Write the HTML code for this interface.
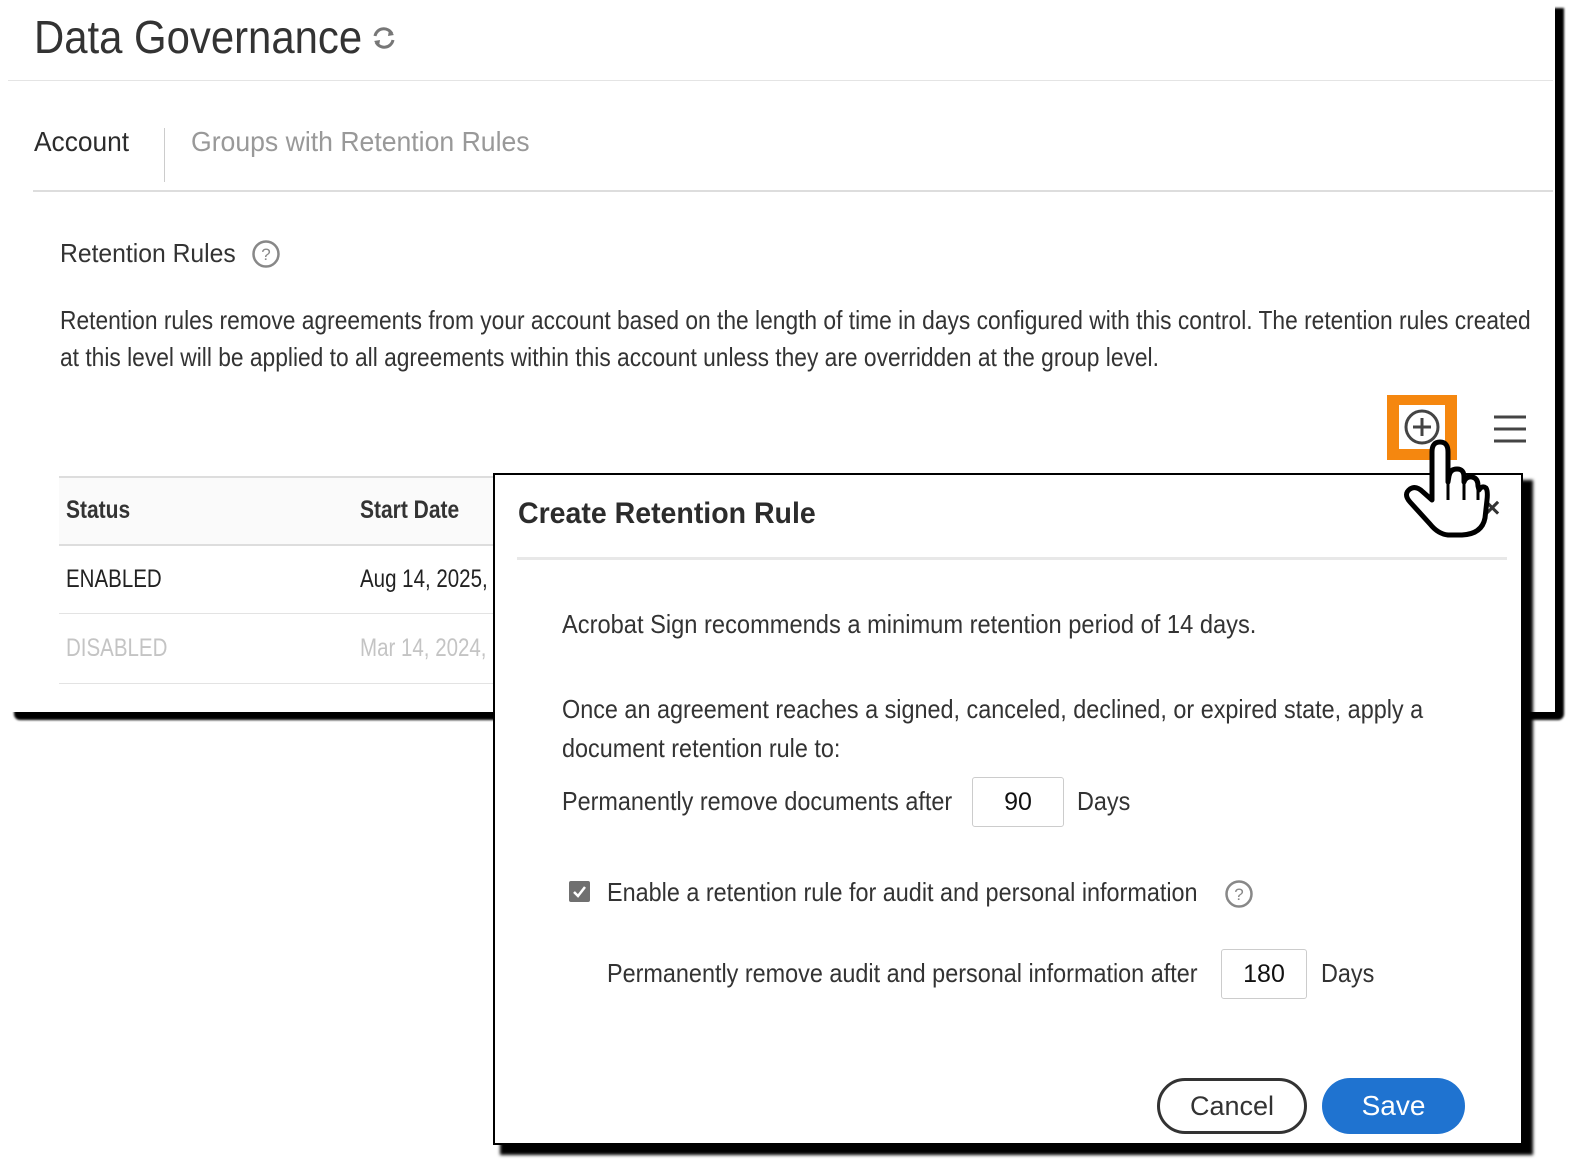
<!DOCTYPE html>
<html><head><meta charset="utf-8"><style>
*{margin:0;padding:0;box-sizing:border-box}
body{width:1595px;height:1176px;background:#fff;position:relative;overflow:hidden;font-family:"Liberation Sans",sans-serif;color:#2c2c2c}
.a{position:absolute;white-space:nowrap}
.c{display:inline-block;transform:scaleX(.82);transform-origin:left center}
</style></head><body>
<div class="a" style="left:14px;top:8px;width:1550px;height:712px;background:#000;border-radius:0 0 6px 6px;filter:blur(1px)"></div>
<div class="a" style="left:8px;top:0;width:1547px;height:712px;background:#fff"></div>

<div class="a" style="left:34px;top:10px;font-size:46px;color:#333"><span class="c" style="transform:scaleX(.91)">Data Governance</span></div>
<svg class="a" style="left:370px;top:24px" width="28" height="28" viewBox="0 0 28 28"><path d="M5 12 A9 9 0 0 1 22 10" fill="none" stroke="#777" stroke-width="3"/><path d="M23 16 A9 9 0 0 1 6 18" fill="none" stroke="#777" stroke-width="3"/><path d="M19 6 L24 11 L18 12Z" fill="#777"/><path d="M9 22 L4 17 L10 16Z" fill="#777"/></svg>
<div class="a" style="left:8px;top:80px;width:1545px;height:1px;background:#e4e4e4"></div>

<div class="a" style="left:34px;top:126px;font-size:28px;color:#2c2c2c"><span class="c" style="transform:scaleX(.94)">Account</span></div>
<div class="a" style="left:164px;top:128px;width:1px;height:54px;background:#ccc"></div>
<div class="a" style="left:191px;top:126px;font-size:28px;color:#999"><span class="c" style="transform:scaleX(.95)">Groups with Retention Rules</span></div>
<div class="a" style="left:33px;top:190px;width:1520px;height:2px;background:#ddd"></div>

<div class="a" style="left:60px;top:238px;font-size:26px;color:#333"><span class="c" style="transform:scaleX(.95)">Retention Rules</span></div>
<svg class="a" style="left:251px;top:239px" width="30" height="30" viewBox="0 0 30 30"><circle cx="15" cy="15" r="12.5" fill="none" stroke="#888" stroke-width="2.5"/><text x="15" y="21" font-size="17" text-anchor="middle" fill="#888" font-family="Liberation Sans">?</text></svg>

<div class="a" style="left:60px;top:302px;font-size:26px;color:#333;line-height:37px"><span class="c" style="transform:scaleX(.876)">Retention rules remove agreements from your account based on the length of time in days configured with this control. The retention rules created</span><br><span class="c" style="transform:scaleX(.876)">at this level will be applied to all agreements within this account unless they are overridden at the group level.</span></div>

<div class="a" style="left:1387px;top:395px;width:70px;height:65px;background:#f5870f"></div>
<div class="a" style="left:1399px;top:405px;width:46px;height:44px;background:#fff"></div>
<svg class="a" style="left:1402px;top:407px" width="40" height="40" viewBox="0 0 40 40"><circle cx="20" cy="20" r="16" fill="none" stroke="#444" stroke-width="3"/><path d="M20 11v18M11 20h18" stroke="#444" stroke-width="3"/></svg>
<svg class="a" style="left:1492px;top:414px" width="36" height="30" viewBox="0 0 36 30"><path d="M2 3h32M2 15h32M2 27h32" stroke="#444" stroke-width="3"/></svg>

<div class="a" style="left:59px;top:476px;width:440px;height:70px;background:#fafafa;border-top:2px solid #ddd;border-bottom:2px solid #ddd"></div>
<div class="a" style="left:66px;top:496px;font-size:25px;font-weight:bold;color:#333"><span class="c" style="transform:scaleX(.84)">Status</span></div>
<div class="a" style="left:360px;top:496px;font-size:25px;font-weight:bold;color:#333"><span class="c" style="transform:scaleX(.84)">Start Date</span></div>
<div class="a" style="left:66px;top:565px;font-size:25px;color:#222"><span class="c">ENABLED</span></div>
<div class="a" style="left:360px;top:565px;font-size:25px;color:#222"><span class="c">Aug 14, 2025,</span></div>
<div class="a" style="left:59px;top:613px;width:440px;height:1px;background:#e3e3e3"></div>
<div class="a" style="left:66px;top:634px;font-size:25px;color:#c4c4c4"><span class="c">DISABLED</span></div>
<div class="a" style="left:360px;top:634px;font-size:25px;color:#c4c4c4"><span class="c">Mar 14, 2024,</span></div>
<div class="a" style="left:59px;top:683px;width:440px;height:1px;background:#e3e3e3"></div>

<div class="a" style="left:500px;top:480px;width:1033px;height:675px;background:#000;filter:blur(1.5px)"></div>
<div class="a" style="left:493px;top:473px;width:1030px;height:672px;background:#fff;border:2px solid #000"></div>
<div class="a" style="left:518px;top:497px;font-size:30px;font-weight:bold;color:#2c2c2c"><span class="c" style="transform:scaleX(.95)">Create Retention Rule</span></div>
<div class="a" style="left:1484px;top:492px;font-size:28px;color:#333;font-weight:bold">×</div>
<div class="a" style="left:517px;top:557px;width:990px;height:3px;background:#e8e8e8"></div>

<div class="a" style="left:562px;top:609px;font-size:26px;color:#333"><span class="c" style="transform:scaleX(.91)">Acrobat Sign recommends a minimum retention period of 14 days.</span></div>
<div class="a" style="left:562px;top:690px;font-size:26px;color:#333;line-height:39px"><span class="c" style="transform:scaleX(.9)">Once an agreement reaches a signed, canceled, declined, or expired state, apply a</span><br><span class="c" style="transform:scaleX(.9)">document retention rule to:</span></div>
<div class="a" style="left:562px;top:786px;font-size:26px;color:#333"><span class="c" style="transform:scaleX(.9)">Permanently remove documents after</span></div>
<div class="a" style="left:972px;top:777px;width:92px;height:50px;border:1px solid #ccc;border-radius:3px;font-size:25px;color:#111;text-align:center;line-height:48px">90</div>
<div class="a" style="left:1077px;top:786px;font-size:26px;color:#333"><span class="c" style="transform:scaleX(.9)">Days</span></div>

<div class="a" style="left:569px;top:881px;width:21px;height:21px;background:#707070;border-radius:2px"></div>
<svg class="a" style="left:569px;top:881px" width="21" height="21" viewBox="0 0 21 21"><path d="M5 11l4 4 7-9" fill="none" stroke="#fff" stroke-width="2.5"/></svg>
<div class="a" style="left:607px;top:877px;font-size:26px;color:#333"><span class="c" style="transform:scaleX(.9)">Enable a retention rule for audit and personal information</span></div>
<svg class="a" style="left:1224px;top:879px" width="30" height="30" viewBox="0 0 30 30"><circle cx="15" cy="15" r="12.5" fill="none" stroke="#888" stroke-width="2.5"/><text x="15" y="21" font-size="17" text-anchor="middle" fill="#888" font-family="Liberation Sans">?</text></svg>

<div class="a" style="left:607px;top:958px;font-size:26px;color:#333"><span class="c" style="transform:scaleX(.9)">Permanently remove audit and personal information after</span></div>
<div class="a" style="left:1221px;top:949px;width:86px;height:50px;border:1px solid #ccc;border-radius:3px;font-size:25px;color:#111;text-align:center;line-height:48px">180</div>
<div class="a" style="left:1321px;top:958px;font-size:26px;color:#333"><span class="c" style="transform:scaleX(.9)">Days</span></div>

<div class="a" style="left:1157px;top:1078px;width:150px;height:56px;border:3px solid #333;border-radius:28px;font-size:27px;color:#333;text-align:center;line-height:50px">Cancel</div>
<div class="a" style="left:1322px;top:1078px;width:143px;height:56px;background:#1f73d0;border-radius:28px;font-size:28px;color:#fff;text-align:center;line-height:56px">Save</div>

<svg class="a" style="left:1400px;top:438px" width="90" height="102" viewBox="0 0 90 102">
<path d="M32 62 L32 14 Q32 4 40 4 Q48 4 48 14 L48 44 L49 38 Q50 31 57 31 Q64 31 64 39 L64 44 Q66 38 72 39 Q78 40 78 48 L79 52 Q82 47 86 50 Q88 53 87 62 L85 80 Q82 96 62 97 L48 97 Q38 96 30 86 L10 64 Q3 56 10 51 Q16 47 23 54 Z" fill="#fff" stroke="#000" stroke-width="5" stroke-linejoin="round"/>
<path d="M48 44 L48 62 M64 44 L64 62 M78 52 L78 62" stroke="#000" stroke-width="3"/>
</svg>
</body></html>
